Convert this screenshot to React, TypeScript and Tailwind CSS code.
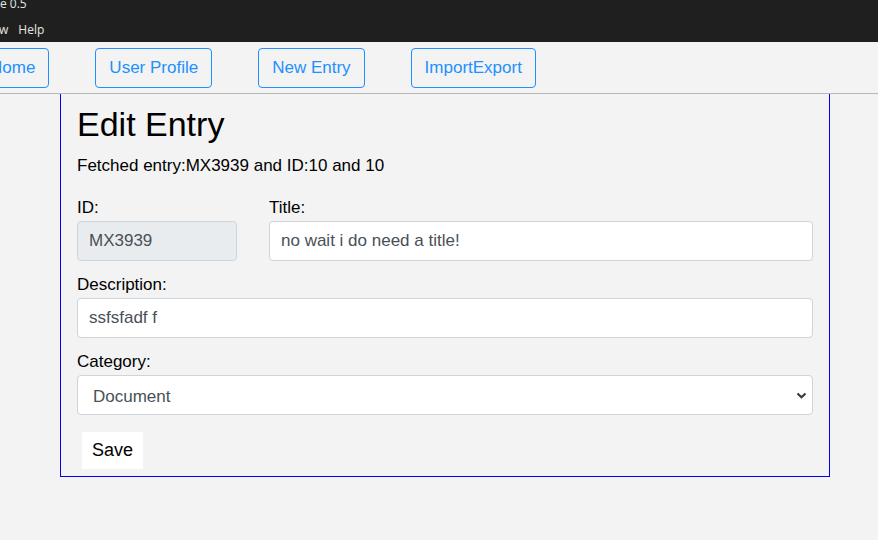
import { useState } from "react";

const navItems = ["Home", "User Profile", "New Entry", "ImportExport"];

function Field({ label, children }: { label: string; children: React.ReactNode }) {
  return (
    <div className="flex flex-col">
      <label className="block leading-[26px] text-black">{label}</label>
      {children}
    </div>
  );
}

const inputCls =
  "h-[40px] w-full rounded-[4px] border border-[#ced4da] px-[11px] text-[17px] text-[#495057] outline-none";

export default function App() {
  const [title, setTitle] = useState("no wait i do need a title!");
  const [desc, setDesc] = useState("ssfsfadf f");
  const [category, setCategory] = useState("Document");

  return (
    <div className="min-h-[540px] bg-[#f3f3f3] font-['Liberation_Sans',Arial,sans-serif] text-[17px] text-black">
      {/* window chrome */}
      <div className="flex h-[42px] flex-col overflow-hidden bg-[#1f1f1f] font-['Open_Sans','Noto_Sans',sans-serif] text-[12px] text-[#e6e6e6]">
        <div className="-mt-[5px] h-[23px] leading-[18px]">e 0.5</div>
        <div className="flex h-[24px] items-center gap-[10px] leading-none">
          <span className="-ml-[1px]">w</span>
          <span>Help</span>
        </div>
      </div>

      {/* nav */}
      <nav className="flex h-[52px] items-center gap-[46px] border-b border-[#b8b8b8]">
        {navItems.map((item, i) => (
          <button
            key={item}
            type="button"
            className={`h-[40px] rounded-[4px] border border-[#1e90ff] bg-transparent px-[13px] text-[17px] text-[#1e90ff] ${
              i === 0 ? "-ml-[24px]" : ""
            }`}
          >
            {item}
          </button>
        ))}
      </nav>

      {/* card */}
      <div className="ml-[60px] w-[770px] border border-t-0 border-[#0000ff] px-[16px] pt-[10px] pb-[7px]">
        <h1 className="mb-[8px] text-[34px] leading-[1.2] font-normal">Edit Entry</h1>
        <p className="mb-[17px] leading-[1.5]">Fetched entry:MX3939 and ID:10 and 10</p>

        <div className="mb-[11px] flex gap-[32px]">
          <div className="w-[160px] shrink-0">
            <Field label="ID:">
              <input
                className={`${inputCls} bg-[#e9ecef]`}
                value="MX3939"
                disabled
                readOnly
              />
            </Field>
          </div>
          <div className="flex-1">
            <Field label="Title:">
              <input
                className={`${inputCls} bg-white`}
                value={title}
                onChange={(e) => setTitle(e.target.value)}
              />
            </Field>
          </div>
        </div>

        <div className="mb-[11px]">
          <Field label="Description:">
            <input
              className={`${inputCls} bg-white`}
              value={desc}
              onChange={(e) => setDesc(e.target.value)}
            />
          </Field>
        </div>

        <div className="mb-[17px]">
          <Field label="Category:">
            <div className="relative">
              <select
                className={`${inputCls} appearance-none bg-white pl-[15px] pt-[3px]`}
                value={category}
                onChange={(e) => setCategory(e.target.value)}
              >
                <option>Document</option>
                <option>Image</option>
                <option>Other</option>
              </select>
              <svg
                className="pointer-events-none absolute right-[6px] top-[17px]"
                width="11"
                height="7"
                viewBox="0 0 11 7"
                fill="none"
                stroke="#343a40"
                strokeWidth="2.2"
                aria-hidden="true"
              >
                <path d="M1.5 1.5 L5.5 5.2 L9.5 1.5" />
              </svg>
            </div>
          </Field>
        </div>

        <button
          type="button"
          className="ml-[5px] h-[37px] bg-white px-[10px] text-[18px] text-black"
        >
          Save
        </button>
      </div>
    </div>
  );
}
